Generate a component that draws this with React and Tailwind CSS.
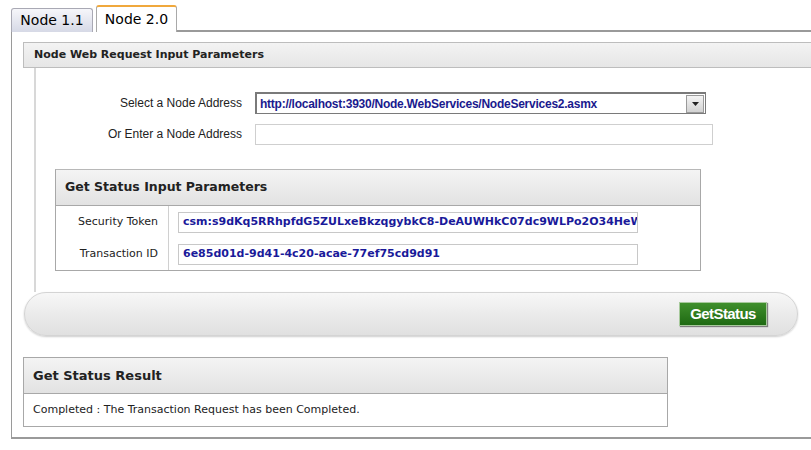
import React from 'react';

const tahoma = { fontFamily: '"DejaVu Sans", Tahoma, sans-serif' };

const App = () => {
  return (
    <div className="w-[811px] h-[450px] bg-white overflow-hidden font-['Liberation_Sans',Arial,sans-serif]">
      {/* Tabs */}
      <div className="flex items-end pl-[11px] pt-[6px] h-[32px]">
        <div className="w-[82px] h-[24px] border border-b-0 border-[#a9a9b4] rounded-t-[3px] bg-gradient-to-b from-[#f6f6fa] to-[#d6d9e6] flex items-center justify-center text-[14px] text-black font-['DejaVu_Sans',sans-serif]">
          Node 1.1
        </div>
        <div className="ml-[3px] w-[81px] h-[27px] border border-b-0 border-[#a9a9a9] border-t-2 border-t-[#f0a83c] rounded-t-[3px] bg-white flex items-center justify-center text-[14px] text-black font-['DejaVu_Sans',sans-serif]">
          Node 2.0
        </div>
        <div className="flex-1 h-[2px] bg-[#9a9a9a]" />
      </div>

      {/* Tab content */}
      <div className="ml-[11px] border-l border-b-2 border-[#9a9a9a] h-[407px] pl-[11px] pt-[10px]">
        {/* Node Web Request panel */}
        <div className="h-[26px] border-y border-l border-[#bdbdbd] bg-gradient-to-b from-[#f3f3f3] to-[#e6e6e6] flex items-center pl-[10px] text-[11px] font-bold text-[#222]" style={tahoma}>
          Node Web Request Input Parameters
        </div>
        <div className="ml-[11px] border-l-2 border-[#d8d8d8] h-[224px] pt-[24px]">
          <div className="flex items-center h-[22px]">
            <div className="w-[206px] text-right text-[12px] text-[#222]">Select a Node Address</div>
            <div className="ml-[13px] w-[451px] h-[22px] border border-[#7a7a7a] border-t-2 border-l-2 flex items-center bg-white">
              <span className="flex-1 pl-[3px] text-[12px] font-bold text-[#1a1a8e] tracking-[-0.25px] truncate">
                http://localhost:3930/Node.WebServices/NodeServices2.asmx
              </span>
              <span className="w-[18px] h-[18px] mr-[1px] border border-[#9a9a9a] bg-gradient-to-b from-[#f4f4f4] to-[#d2d2d2] flex items-center justify-center">
                <svg width="7" height="4" viewBox="0 0 7 4"><path d="M0 0h7L3.5 4z" fill="#222" /></svg>
              </span>
            </div>
          </div>
          <div className="flex items-center h-[22px] mt-[9px]">
            <div className="w-[206px] text-right text-[12px] text-[#222]">Or Enter a Node Address</div>
            <div className="ml-[13px] w-[458px] h-[21px] border border-[#cfcfcf] bg-white" />
          </div>

          {/* Get Status Input Parameters */}
          <div className="mt-[24px] ml-[19px] w-[646px] border border-[#a8a8a8] border-t-[#b8b8b8]" style={tahoma}>
            <div className="h-[36px] bg-gradient-to-b from-[#f4f4f4] to-[#e2e2e2] border-b border-[#a8a8a8] flex items-center pl-[9px] text-[12.5px] font-bold text-[#222]">
              Get Status Input Parameters
            </div>
            <div className="flex h-[32px]">
              <div className="w-[113px] border-r border-[#d0d0d0] flex items-center justify-end pr-[10px] text-[11px] text-[#222]">Security Token</div>
              <div className="flex items-center pl-[9px]">
                <div className="w-[460px] h-[21px] border border-[#c8c8c8] flex items-center pl-[4px] overflow-hidden whitespace-nowrap text-[11px] font-bold text-[#1a1a9a]">
                  csm:s9dKq5RRhpfdG5ZULxeBkzqgybkC8-DeAUWHkC07dc9WLPo2O34HeW
                </div>
              </div>
            </div>
            <div className="flex h-[32px]">
              <div className="w-[113px] border-r border-[#d0d0d0] flex items-center justify-end pr-[10px] text-[11px] text-[#222]">Transaction ID</div>
              <div className="flex items-center pl-[9px]">
                <div className="w-[460px] h-[21px] border border-[#c8c8c8] flex items-center pl-[4px] overflow-hidden whitespace-nowrap text-[11px] font-bold text-[#1a1a9a]">
                  6e85d01d-9d41-4c20-acae-77ef75cd9d91
                </div>
              </div>
            </div>
          </div>
        </div>

        {/* Button bar */}
        <div className="ml-[1px] w-[774px] h-[44px] rounded-[22px] border border-[#d4d4d4] bg-gradient-to-b from-[#f7f7f7] via-[#ebebeb] to-[#e0e0e0] shadow-[0_1px_2px_rgba(0,0,0,0.2)] flex items-center justify-end pr-[30px]">
          <button className="w-[88px] h-[24px] bg-gradient-to-b from-[#3f8f2c] to-[#1e6a12] border border-[#a7c99c] shadow-[1px_1px_1px_rgba(0,0,0,0.45)] text-white text-[15px] font-bold tracking-[-0.6px] flex items-center justify-center">
            GetStatus
          </button>
        </div>

        {/* Get Status Result */}
        <div className="mt-[21px] w-[645px] border border-[#a8a8a8]" style={tahoma}>
          <div className="h-[36px] bg-gradient-to-b from-[#f4f4f4] to-[#e2e2e2] border-b border-[#a8a8a8] flex items-center pl-[9px] text-[13px] font-bold text-[#222]">
            Get Status Result
          </div>
          <div className="h-[32px] flex items-center pl-[9px] text-[11px] text-[#222]">
            Completed : The Transaction Request has been Completed.
          </div>
        </div>
      </div>
    </div>
  );
};

export default App;
